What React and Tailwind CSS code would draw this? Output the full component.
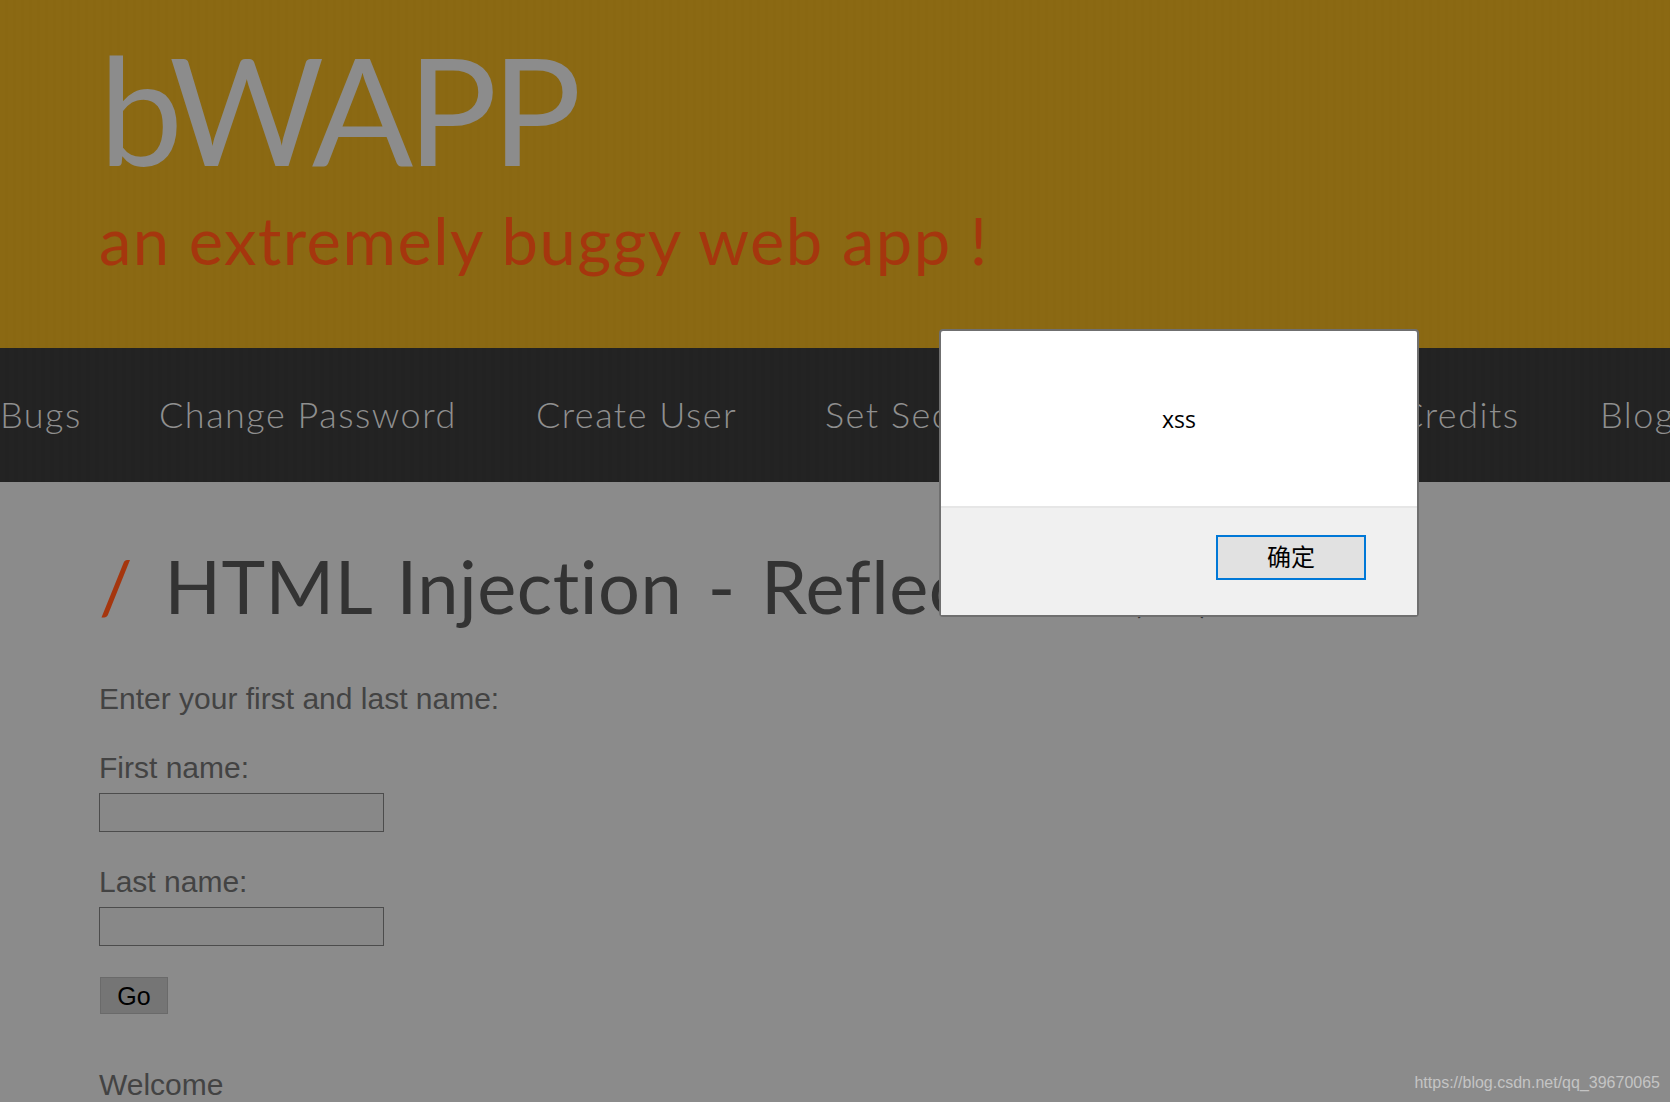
const NAV_ITEMS = [
  { label: 'Bugs', width: 'w-[79px]' },
  { label: 'Change Password', width: 'w-[297px]' },
  { label: 'Create User', width: 'w-[209px]' },
  { label: 'Set Security Level', width: 'w-[330px]' },
  { label: 'Reset', width: 'w-[84px]' },
  { label: 'Credits', width: 'w-[121px]' },
  { label: 'Blog', width: 'w-[80px]' },
];

const Field = ({ label, className }) => (
  <div className={className}>
    <label className="block leading-[32px]">{label}</label>
    <input type="text" className="mt-[9px] block w-[285px] h-[39px] border border-[#4c4c4c] bg-[#888888]" />
  </div>
);

export default function App() {
  return (
    <div className="relative h-[1102px] overflow-hidden bg-[#8b8b8b] font-['Liberation_Sans',Arial,sans-serif]">
      <header className="h-[348px] bg-[#8b6913] bg-[repeating-linear-gradient(90deg,#8b6913_0px,#8b6913_5px,#8a6812_5px,#8a6812_8px)] pl-[99px] font-['Lato',sans-serif]">
        <h1 className="pt-[33px] text-[150px] leading-[150px] font-normal tracking-[-6px] text-[#8c8c8c]">bWAPP</h1>
        <h2 className="mt-[22px] text-[65px] leading-[70px] font-normal tracking-[1.5px] text-[#a5360e]">
          an extremely buggy web app !
        </h2>
      </header>

      <nav className="flex h-[134px] items-center gap-[80px] overflow-hidden bg-[#232323] bg-[repeating-linear-gradient(90deg,#232323_0px,#232323_5px,#222222_5px,#222222_9px)] pb-[2px] font-['Lato',sans-serif] text-[#8f8f8f]">
        {NAV_ITEMS.map((item) => (
          <a key={item.label} className={`${item.width} shrink-0 whitespace-nowrap text-[36px] font-light leading-[40px] tracking-[1.5px]`}>
            {item.label}
          </a>
        ))}
      </nav>

      <main className="pl-[99px] text-[30px] text-[#434343]">
        <h1 className="mt-[59px] whitespace-nowrap font-['Lato',sans-serif] text-[74px] leading-[90px] font-normal tracking-[0.5px] text-[#333333] [word-spacing:6px]">
          <span className="mr-[6px] text-[#a5360e]">/</span> HTML Injection - Reflected <span className="ml-[35px] text-[30px]">(GET)</span>
        </h1>

        <p className="mt-[36px] leading-[32px]">Enter your first and last name:</p>

        <form>
          <Field label="First name:" className="mt-[37px]" />
          <Field label="Last name:" className="mt-[34px]" />
          <button type="button" className="mt-[31px] ml-px block h-[37px] w-[68px] border border-[#6a6a6a] bg-[#757575] pt-[2px] text-[25px] leading-none text-black">
            Go
          </button>
        </form>

        <p className="mt-[55px] leading-[32px]">Welcome</p>
      </main>

      <div className="absolute right-[10px] bottom-[9px] text-[16px] leading-[20px] text-[#c4c4c4]">
        https://blog.csdn.net/qq_39670065
      </div>

      <div className="absolute left-[939px] top-[329px] flex h-[288px] w-[480px] flex-col rounded-[4px] border-2 border-[#6f6f6f] bg-white">
        <div className="flex flex-1 items-center justify-center pt-[2px] font-['Open_Sans',sans-serif] text-[23px] text-black">
          xss
        </div>
        <div className="flex h-[109px] justify-end border-t-2 border-[#e6e6e6] bg-[#f0f0f0] pt-[27px] pr-[51px]">
          <button
            type="button"
            className="h-[45px] w-[150px] border-2 border-[#0078d7] bg-[#e1e1e1] pb-[3px] font-['Noto_Sans_CJK_SC',sans-serif] text-[24px] leading-none text-black"
          >
            确定
          </button>
        </div>
      </div>
    </div>
  );
}
